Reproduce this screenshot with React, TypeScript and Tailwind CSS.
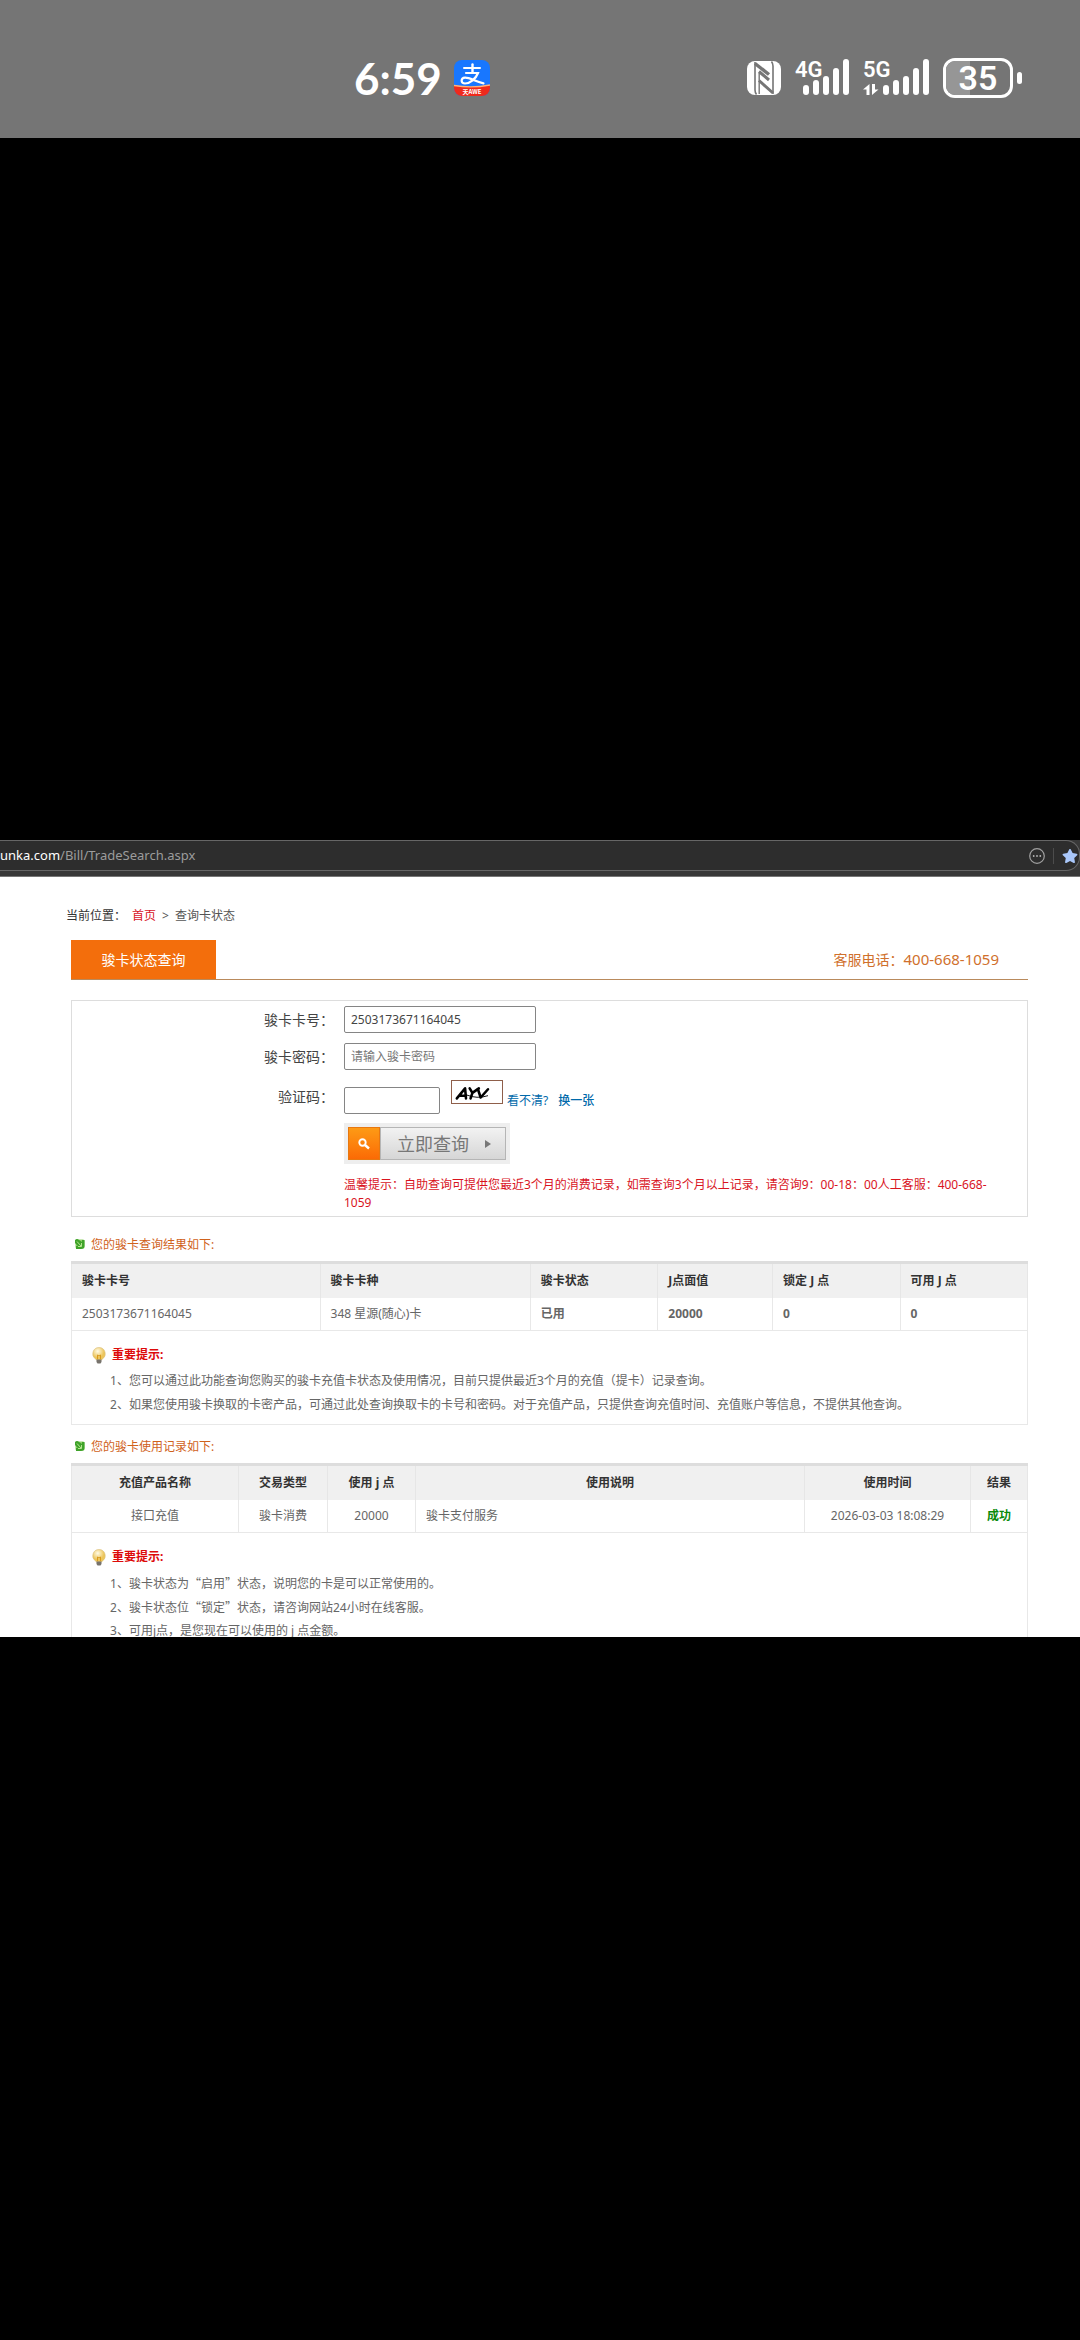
import React from "react";
import { FaStar } from "react-icons/fa";

function PayIcon() {
  return (
    <svg viewBox="0 0 36 36" className="size-9" aria-label="支付宝">
      <defs>
        <clipPath id="pay">
          <rect width="36" height="36" rx="8" />
        </clipPath>
      </defs>
      <g clipPath="url(#pay)">
        <rect width="36" height="36" fill="#1877ff" />
        <path d="M0 25.500Q18 28 36 25V36H0Z" fill="#ee2a1c" />
        <path d="M0 25.500Q18 28.500 36 25" fill="none" stroke="#ffb27a" strokeWidth="1.400" />
      </g>
      <g fill="none" stroke="#fff" strokeLinecap="round">
        <path d="M18.500 4.500V12" strokeWidth="2.400" />
        <path d="M10 8H26" strokeWidth="2" />
        <path d="M12 13H24C22 18.500 16 23.500 11 23.500C6.500 23.500 6.500 18 11 17.700C16 17.500 21 21.500 29.500 23.300" strokeWidth="2.200" />
      </g>
      <text x="18" y="33.500" textAnchor="middle" fontSize="6" fontWeight="700" fill="#fff" fontFamily="Noto Sans CJK SC">天AWE</text>
    </svg>
  );
}

function NfcIcon() {
  return (
    <svg viewBox="0 0 34 34" className="size-[34px]" aria-label="NFC">
      <rect width="34" height="34" rx="8" fill="#fff" />
      <g fill="none" stroke="#757575">
        <path d="M8 1V29Q8 31.500 9.500 33.500" strokeWidth="1.600" />
        <path d="M26 33V5Q26 2.500 24.500 .5" strokeWidth="1.600" />
        <path d="M8 2.500L22 13.500" strokeWidth="3.400" />
        <path d="M12.200 12V33" strokeWidth="1.400" />
        <path d="M12 10.500L22 19M12 19.500L26 32" strokeWidth="3" />
      </g>
    </svg>
  );
}

function Bars({ x }: { x: number }) {
  const tops = [26, 21, 17, 9, 0];
  return (
    <>
      {tops.map((top, i) => (
        <rect key={top} x={x + i * 10} y={top} width="6" height={36 - top} rx="3" fill="#fff" />
      ))}
    </>
  );
}

function Signal4G() {
  return (
    <svg viewBox="0 0 54 38" className="h-[38px] w-[54px] overflow-visible" aria-label="4G">
      <text x="0" y="18" fontSize="22" fontWeight="600" fill="#fff" fontFamily="Roboto, sans-serif">4G</text>
      <Bars x={8} />
    </svg>
  );
}

function Signal5G() {
  return (
    <svg viewBox="0 0 66 38" className="h-[38px] w-[66px] overflow-visible" aria-label="5G">
      <text x="0" y="18" fontSize="22" fontWeight="600" fill="#fff" fontFamily="Roboto, sans-serif">5G</text>
      <path d="M6.500 36V25L0 30.500H3.500V36ZM9 25V36L15.500 30.500H12V25Z" fill="#fff" />
      <Bars x={20} />
    </svg>
  );
}

function StatusBar() {
  return (
    <header className="flex h-[138px] shrink-0 items-center bg-[#757575] pt-[18px] pr-[58px] pl-[354px] text-white">
      <span className="font-[Lato] text-[44px] leading-[48px] font-bold">6:59</span>
      <span className="ml-3">
        <PayIcon />
      </span>
      <div className="ml-auto flex items-center gap-[14px]">
        <NfcIcon />
        <Signal4G />
        <Signal5G />
        <div className="flex items-center gap-1">
          <div className="relative flex h-10 w-[70px] items-center justify-center overflow-hidden rounded-[12px] border-[3px] border-white">
            <div className="absolute inset-y-0 left-0 w-[38%] bg-[#969696]" />
            <span className="relative font-[Roboto] text-[34px] leading-none font-semibold">35</span>
          </div>
          <div className="h-3 w-[5px] rounded-full bg-white" />
        </div>
      </div>
    </header>
  );
}

function AddressBar() {
  return (
    <div className="border-b border-[#777] bg-[#383838] pb-[5px]">
      <div className="flex h-[31px] items-center rounded-r-[14px] border-y border-r border-[#666] bg-[#2d2d2d] pr-px text-[13px]">
        <span className="text-white">unka.com</span>
        <span className="text-[#9c9c9c]">/Bill/TradeSearch.aspx</span>
        <button type="button" aria-label="更多" className="ml-auto">
          <svg viewBox="0 0 16 16" className="size-4">
            <circle cx="8" cy="8" r="7.300" fill="none" stroke="#a0a0a0" strokeWidth="1.200" />
            <g fill="#b5b5b5">
              <circle cx="4.700" cy="8" r=".9" />
              <circle cx="8" cy="8" r=".9" />
              <circle cx="11.300" cy="8" r=".9" />
            </g>
          </svg>
        </button>
        <span className="mx-2 h-4 w-px bg-[#4c4c4c]" />
        <button type="button" aria-label="收藏" className="text-[#a9c7fa]">
          <FaStar className="size-4" />
        </button>
      </div>
    </div>
  );
}

function Captcha() {
  return (
    <svg viewBox="0 0 52 24" className="h-6 w-[52px] border border-[#8f5f4a]" aria-label="验证码图片">
      <rect width="52" height="24" fill="#fff" />
      <g fill="none" stroke="#000" strokeWidth="2.800" strokeLinecap="round" strokeLinejoin="round">
        <path d="M4 19L13 8L14 19M7 16H14" />
        <path d="M18 8L21 13L28 8M21 13L19 19" />
        <path d="M27 9L30 18L38 9" />
      </g>
      <path d="M14 15Q26 20 38 16" fill="none" stroke="#000" strokeWidth="1" />
    </svg>
  );
}

function SearchForm() {
  const label = "w-[262px] shrink-0 text-right text-sm text-[#444]";
  const field = "ml-[10px] h-[27px] rounded-[2px] border border-[#858585] bg-white px-[6px] text-xs text-[#444] outline-none placeholder:text-[#777]";
  return (
    <form className="mt-5 border border-[#ddd] pt-[5px] pb-1" onSubmit={(e) => e.preventDefault()}>
      <div className="flex items-center">
        <label htmlFor="card" className={label}>骏卡卡号：</label>
        <input id="card" defaultValue="2503173671164045" className={`${field} w-48`} />
      </div>
      <div className="mt-[10px] flex items-center">
        <label htmlFor="pwd" className={label}>骏卡密码：</label>
        <input id="pwd" placeholder="请输入骏卡密码" className={`${field} w-48`} />
      </div>
      <div className="mt-[10px] flex h-[34px] items-end">
        <label htmlFor="code" className={`${label} self-center`}>验证码：</label>
        <input id="code" className={`${field} w-24`} />
        <span className="ml-[11px] self-start">
          <Captcha />
        </span>
        <a href="#code" className="ml-1 pb-1 text-xs leading-[18px] text-[#0069aa]">看不清?</a>
        <a href="#code" className="ml-[10px] pb-1 text-xs leading-[18px] font-medium text-[#0069aa]">换一张</a>
      </div>
      <div className="mt-[9px] ml-[272px] pr-[22px]">
        <button type="submit" className="flex h-[41px] w-[166px] bg-[#eee] p-1">
          <span className="flex h-full w-8 items-center justify-center border border-[#e8780f] bg-linear-to-b from-[#fd9a15] to-[#fb6a05]">
            <svg viewBox="0 0 12 12" className="size-3" fill="none" stroke="#fff">
              <circle cx="4.500" cy="4.500" r="3.200" strokeWidth="1.900" />
              <path d="M7 7L11 10.500" strokeWidth="2.400" />
            </svg>
          </span>
          <span className="flex h-full flex-1 items-center border border-[#b5b5b5] bg-linear-to-b from-[#f2f2f2] to-[#d6d6d6] pl-4 text-lg text-[#777]">
            立即查询
            <svg viewBox="0 0 6 8" className="ml-4 h-2 w-[6px]">
              <path d="M0 0L6 4L0 8Z" fill="#777" />
            </svg>
          </span>
        </button>
        <p className="mt-3 text-xs leading-[18px] text-[#d9141e]">
          温馨提示：自助查询可提供您最近3个月的消费记录，如需查询3个月以上记录，请咨询9：00-18：00人工客服：400-668-1059
        </p>
      </div>
    </form>
  );
}

function SectionTitle({ children }: { children: React.ReactNode }) {
  return (
    <h2 className="flex h-[18px] items-center text-xs text-[#d0621c]">
      <svg viewBox="0 0 10 10" className="mr-[6px] mb-[2px] ml-1 size-[10px]">
        <rect width="9" height="9" x=".5" y=".5" rx="1.500" fill="#8fd06a" />
        <path d="M0 1Q2-1 4 1L7 3V1H9.500V7Q9.500 10 6 10H1V7H3L0 4Z" fill="#3fa32a" />
        <path d="M2 2.500L6 7M3 7.500H6.500V4" fill="none" stroke="#b5e58f" strokeWidth="1" />
      </svg>
      {children}
    </h2>
  );
}

function Bulb() {
  return (
    <svg viewBox="0 0 14 17" className="h-[17px] w-[14px]">
      <defs>
        <radialGradient id="bulb" cx="40%" cy="30%">
          <stop offset="0" stopColor="#fffbe6" />
          <stop offset="1" stopColor="#edc65c" />
        </radialGradient>
      </defs>
      <path d="M7 .5A6.300 6.300 0 0 0 3.500 12L4.500 13H9.500L10.500 12A6.300 6.300 0 0 0 7 .5Z" fill="url(#bulb)" stroke="#d9bd78" strokeWidth=".6" />
      <path d="M5.500 12V8L7 9L8.500 8V12" fill="none" stroke="#d99a1c" strokeWidth="1" />
      <path d="M4.500 12.500H9.500V15L8.500 16.500H5.500L4.500 15Z" fill="#77736c" />
    </svg>
  );
}

// Curly quotes are set in the Chinese face, where they take a full square.
function withWideQuotes(text: string) {
  return text.split(/([“”])/).map((part, i) =>
    part === "“" || part === "”" ? (
      <span key={i} lang="zh-CN" className="font-['Noto_Sans_CJK_SC',sans-serif]">{part}</span>
    ) : (
      part
    ),
  );
}

function Notice({ items }: { items: string[] }) {
  return (
    <div className="border border-t-0 border-[#e8e8e8] px-5 pt-[15px] pb-[7px] text-xs text-[#666]">
      <h3 className="flex h-[18px] items-center gap-[6px] font-bold text-[#dd0a0a]">
        <Bulb />
        重要提示:
      </h3>
      <ol className="mt-[5px] pl-[18px] leading-6">
        {items.map((t, i) => (
          <li key={t} className="h-6">{i + 1}、{withWideQuotes(t)}</li>
        ))}
      </ol>
    </div>
  );
}

const th = "h-[35px] border-x border-[#e6e6e6] px-[10px] font-bold text-[#333]";
const td = "h-[33px] border border-t-0 border-[#e8e8e8] px-[10px]";
const table = "mt-[7px] w-full table-fixed border-collapse border-t-[3px] border-[#ddd] text-xs leading-[18px] text-[#666]";

function ResultTable() {
  return (
    <table className={table}>
      <thead className="bg-[#f0f0f0] text-left">
        <tr>
          <th className={`${th} w-[26%]`}>骏卡卡号</th>
          <th className={`${th} w-[22%]`}>骏卡卡种</th>
          <th className={th}>骏卡状态</th>
          <th className={`${th} w-[12%]`}>J点面值</th>
          <th className={th}>锁定 J 点</th>
          <th className={th}>可用 J 点</th>
        </tr>
      </thead>
      <tbody>
        <tr>
          <td className={td}>2503173671164045</td>
          <td className={td}>348 星源(随心)卡</td>
          <td className={`${td} font-bold`}>已用</td>
          <td className={`${td} font-bold`}>20000</td>
          <td className={`${td} font-bold`}>0</td>
          <td className={`${td} font-bold`}>0</td>
        </tr>
      </tbody>
    </table>
  );
}

function UsageTable() {
  return (
    <table className={`${table} text-center`}>
      <thead className="bg-[#f0f0f0]">
        <tr>
          <th className={`${th} w-[167px]`}>充值产品名称</th>
          <th className={`${th} w-[89px]`}>交易类型</th>
          <th className={`${th} w-[88px]`}>使用 j 点</th>
          <th className={th}>使用说明</th>
          <th className={`${th} w-[166px]`}>使用时间</th>
          <th className={`${th} w-[57px]`}>结果</th>
        </tr>
      </thead>
      <tbody>
        <tr>
          <td className={td}>接口充值</td>
          <td className={td}>骏卡消费</td>
          <td className={td}>20000</td>
          <td className={`${td} text-left`}>骏卡支付服务</td>
          <td className={td}>2026-03-03 18:08:29</td>
          <td className={`${td} font-bold text-[#0a8a0a]`}>成功</td>
        </tr>
      </tbody>
    </table>
  );
}

export default function App() {
  return (
    <div className="flex min-h-screen flex-col bg-black font-['Noto_Sans','Noto_Sans_CJK_SC',sans-serif]">
      <StatusBar />
      <div className="flex-[702]" />
      <main className="h-[797px] overflow-hidden bg-white">
        <AddressBar />
        <div className="pr-[52px] pl-[71px]">
          <nav className="-ml-[5px] flex pt-[30px] text-xs leading-[18px] text-[#555]">
            <span className="text-[#333]">当前位置：</span>
            <a href="#home" className="ml-[6px] text-[#d9141e]">首页</a>
            <span className="mx-[6px]">&gt;</span>
            <span>查询卡状态</span>
          </nav>
          <div className="mt-[15px] flex items-stretch justify-between border-b border-[#b98a5c]">
            <h1 className="flex h-[39px] w-[145px] items-center justify-center bg-[#f36e0c] text-sm text-white">骏卡状态查询</h1>
            <p className="flex items-center pr-[29px] text-sm text-[#d0702c]">
              客服电话：<span className="text-[15px]">400-668-1059</span>
            </p>
          </div>
          <SearchForm />
          <div className="mt-[19px]">
            <SectionTitle>您的骏卡查询结果如下:</SectionTitle>
            <ResultTable />
            <Notice
              items={[
                "您可以通过此功能查询您购买的骏卡充值卡状态及使用情况，目前只提供最近3个月的充值（提卡）记录查询。",
                "如果您使用骏卡换取的卡密产品，可通过此处查询换取卡的卡号和密码。对于充值产品，只提供查询充值时间、充值账户等信息，不提供其他查询。",
              ]}
            />
          </div>
          <div className="mt-[13px]">
            <SectionTitle>您的骏卡使用记录如下:</SectionTitle>
            <UsageTable />
            <Notice
              items={[
                "骏卡状态为“启用”状态，说明您的卡是可以正常使用的。",
                "骏卡状态位“锁定”状态，请咨询网站24小时在线客服。",
                "可用j点，是您现在可以使用的 j 点金额。",
              ]}
            />
          </div>
        </div>
      </main>
      <div className="flex-[703]" />
    </div>
  );
}
